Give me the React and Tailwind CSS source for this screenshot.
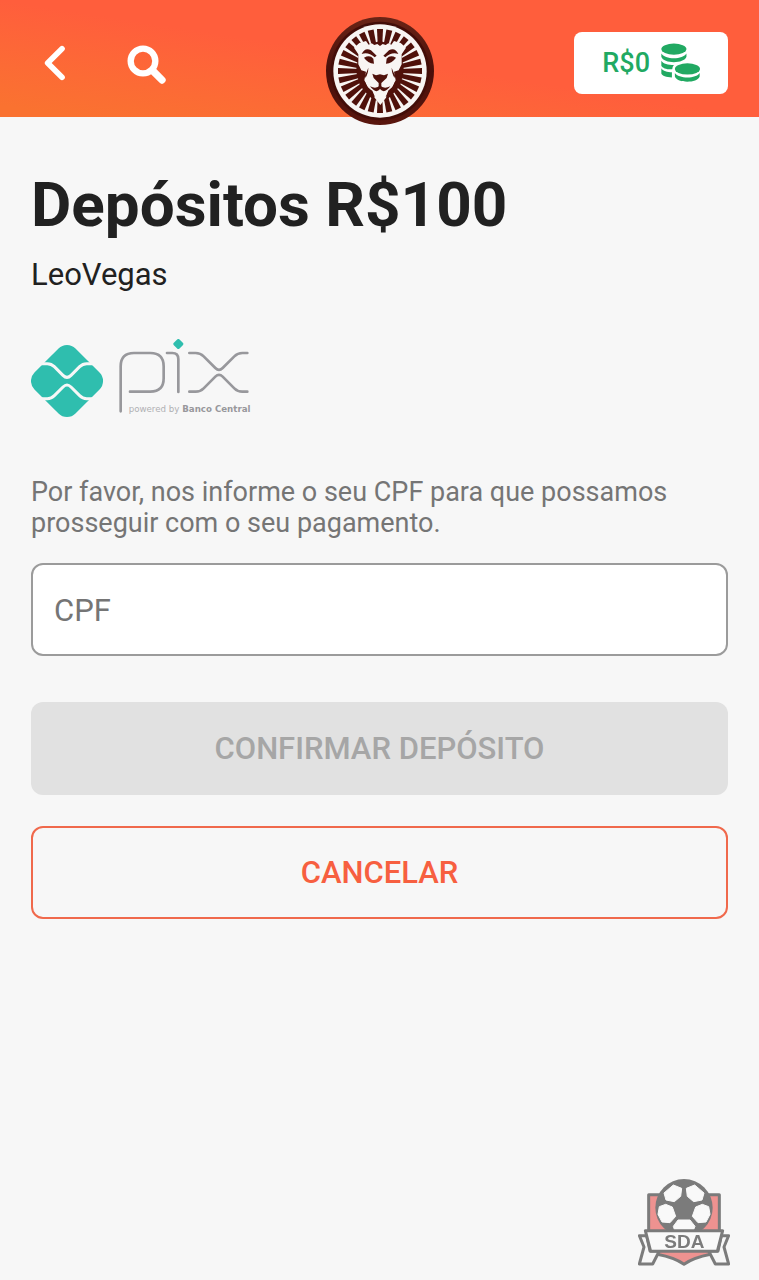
import React, { useState } from "react";

const RAY_COUNT = 28;

const LionLogo = () => (
  <svg viewBox="18 20 324 324" className="w-27 h-27" aria-hidden="true">
    <defs>
      <linearGradient id="lionRing" x1="0" y1="0" x2="0" y2="1">
        <stop offset="0" stopColor="#6a2416" />
        <stop offset="0.5" stopColor="#4a0f0a" />
        <stop offset="1" stopColor="#5a160e" />
      </linearGradient>
    </defs>
    <circle cx="180" cy="182" r="162" fill="url(#lionRing)" />
    <circle cx="180" cy="182" r="148" fill="#430d08" />
    <circle cx="180" cy="182" r="140" fill="#f8f5f3" />
    <g fill="#4f110b">
      {Array.from({ length: RAY_COUNT }, (_, i) => (
        <polygon
          key={i}
          points="171,56 189,56 186,122 174,122"
          transform={`rotate(${(360 / RAY_COUNT) * i} 180 182)`}
        />
      ))}
      <path d="M180 92 L208 100 L222 112 L244 132 L252 182 L240 226 L214 256 L198 270 H162 L146 256 L120 226 L108 182 L116 132 L138 112 L152 100 Z" />
    </g>
    {/* face */}
    <path
      fill="#f8f5f3"
      d="M138 92 L146 103 L155 99 L163 104 L172 101 L180 107 L188 101 L197 104 L205 99 L214 103 L222 92 L242 98 L258 112 L245 132 L245 162 L236 180 L222 184 L227 210 L217 230 L206 240 L198 262 L181 284 L164 262 L154 240 L143 230 L133 210 L138 184 L124 180 L115 162 L115 132 L102 112 L118 98 Z"
    />
    <g fill="#4f110b">
      <path d="M125 131 Q135 110 153 120 L170 136 L164 141 Q144 123 125 131 Z" />
      <path d="M235 131 Q225 110 207 120 L190 136 L196 141 Q216 123 235 131 Z" />
      <path d="M132 142 Q150 132 160 145 L162 160 Q143 158 132 142 Z" />
      <path d="M228 142 Q210 132 200 145 L198 160 Q217 158 228 142 Z" />
      <path d="M157 190 L168 195 L180 192 L192 195 L204 190 L200 203 L184 218 V228 H176 V218 L161 203 Z" />
      <path d="M150 228 Q170 238 180 224 Q190 238 211 228 Q193 252 180 236 Q168 252 150 228 Z" />
      <path d="M135 194 Q141 184 145 172 Q145 190 136 203 Z" />
      <path d="M225 194 Q219 184 215 172 Q215 190 224 203 Z" />
      <path d="M134 212 Q143 238 157 241 L165 260 L146 248 L130 226 Z" />
      <path d="M226 212 Q217 238 205 241 L197 260 L216 248 L230 226 Z" />
    </g>
  </svg>
);

const CoinsIcon = () => (
  <svg
    viewBox="300 70 118 120"
    className="w-[39px] h-10"
    fill="#21a962"
    aria-hidden="true"
  >
    <ellipse cx="339" cy="88" rx="38" ry="17" />
    <path d="M301 101 C311 120 367 120 377 101 V111 C370 133 308 133 301 111 Z" />
    <path d="M301 123 C306 132 322 136 339 136 Q334 142 334 149 C318 150 304 145 301 138 Z" />
    <path d="M301 146 C305 154 320 158 333 158 V174 C316 173 303 169 301 162 Z" />
    <ellipse cx="380" cy="148" rx="38" ry="17" />
    <path d="M342 160 C353 178 407 178 417 160 V171 C410 192 349 192 342 171 Z" />
  </svg>
);

const PixLogo = () => (
  <svg
    viewBox="33 25 666 237"
    className="w-[222px] h-[79px]"
    role="img"
    aria-label="Pix"
  >
    <rect
      x="54"
      y="64"
      width="174"
      height="174"
      rx="36"
      fill="#2fbeae"
      transform="rotate(45 141 151)"
    />
    <g fill="none" stroke="#f7f7f7" strokeWidth="9">
      <path d="M56 99 H82 Q94 99 103 108 L129 134 Q141 146 153 134 L179 108 Q188 99 200 99 H226" />
      <path d="M56 204 H82 Q94 204 103 195 L129 169 Q141 157 153 169 L179 195 Q188 204 200 204 H226" />
    </g>
    <g fill="none" stroke="#98989c" strokeWidth="8" strokeLinecap="round">
      <path d="M302 242 V107 Q302 67 342 67 H391 Q431 67 431 107 V143 Q431 183 391 183 H330" />
      <path d="M441 67 H457 Q475 67 475 85 V184" />
      <path d="M508 67 H527 Q541 67 551 77 L586 112 Q597 123 608 112 L643 77 Q653 67 667 67 H682" />
      <path d="M508 183 H527 Q541 183 551 173 L586 138 Q597 127 608 138 L643 173 Q653 183 667 183 H682" />
    </g>
    <rect
      x="463"
      y="28"
      width="24"
      height="24"
      rx="5"
      fill="#2fbeae"
      transform="rotate(45 475 40)"
    />
    <text x="326" y="243" fontSize="26" fill="#b0b0b3" fontFamily="DejaVu Sans, sans-serif">
      powered by{" "}
      <tspan fontWeight="bold" fill="#98989c">
        Banco Central
      </tspan>
    </text>
  </svg>
);

const SdaBadge = () => (
  <svg viewBox="24 26 276 261" className="w-23 h-[87px]" role="img" aria-label="SDA">
    <g stroke="#7b7b7b" strokeWidth="9" strokeLinejoin="round">
      <path
        fill="#ee9290"
        d="M56 73 H268 V220 Q268 244 242 252 Q190 262 162 282 Q134 262 82 252 Q56 244 56 220 Z"
      />
      <path fill="#f7f7f7" d="M50 196 H28 L42 230 L28 281 H68 L88 242 H60 Z" />
      <path fill="#f7f7f7" d="M274 196 H296 L282 230 L296 281 H256 L236 242 H264 Z" />
    </g>
    <circle cx="162" cy="112" r="86" fill="#7b7b7b" />
    <g fill="#f9f9f9" stroke="#f9f9f9" strokeWidth="3" strokeLinejoin="round">
      <path d="M102 68 L130 44 L155 54 L152 78 L133 94 L108 89 Z" />
      <path d="M222 68 L194 44 L169 54 L172 78 L191 94 L216 89 Z" />
      <path d="M88 109 L107 102 L127 110 L137 138 L120 157 L96 155 L84 132 Z" />
      <path d="M236 109 L217 102 L197 110 L187 138 L204 157 L228 155 L240 132 Z" />
      <path d="M144 149 H180 L195 168 L190 180 H134 L130 168 Z" />
    </g>
    <path
      d="M46 181 H278 L262 243 H62 Z"
      fill="#f9f9f9"
      stroke="#7b7b7b"
      strokeWidth="9"
      strokeLinejoin="round"
    />
    <text
      x="163"
      y="233"
      fontSize="57"
      fontWeight="bold"
      textAnchor="middle"
      fill="#7b7b7b"
      fontFamily="Liberation Sans, sans-serif"
    >
      SDA
    </text>
  </svg>
);

const App = () => {
  const [cpf, setCpf] = useState("");
  const canConfirm = cpf.replace(/\D/g, "").length === 11;

  return (
    <div className="min-h-screen bg-[#f7f7f7] font-['Roboto',sans-serif] text-[#212121]">
      <header className="relative flex items-center justify-between pt-8 pb-[23px] pl-[43px] pr-[31px] bg-linear-to-tr from-[#fa7230] from-5% via-[#ff5e3c] via-50% to-[#ff5e3c]">
        <div className="flex items-center gap-[62px]">
          <button type="button" aria-label="Voltar">
            <svg
              viewBox="130 136 66 108"
              className="w-[22px] h-9"
              fill="none"
              stroke="white"
              strokeWidth="17"
              strokeLinecap="round"
              strokeLinejoin="round"
            >
              <path d="M187 147 L144 190 L187 233" />
            </svg>
          </button>
          <button type="button" aria-label="Buscar">
            <svg
              viewBox="383 129 120 123"
              className="w-10 h-[41px]"
              fill="none"
              stroke="white"
              strokeLinecap="round"
            >
              <circle cx="431" cy="183" r="37" strokeWidth="19" />
              <path d="M463 215 L488 240" strokeWidth="22" />
            </svg>
          </button>
        </div>
        <div className="absolute top-[17px] left-1/2 -translate-x-1/2">
          <LionLogo />
        </div>
        <button
          type="button"
          className="flex items-center justify-center gap-[11px] h-[62px] px-7 rounded-lg bg-white text-[27px] font-medium text-[#21a962]"
        >
          R$0
          <CoinsIcon />
        </button>
      </header>

      <main className="px-[31px] pt-[52px]">
        <h1 className="text-[62px] leading-[72px] font-bold">
          Depósitos R$100
        </h1>
        <p className="mt-4 text-[31px] leading-9">LeoVegas</p>
        <div className="mt-[46px]">
          <PixLogo />
        </div>
        <form className="mt-[59px]" onSubmit={(e) => e.preventDefault()}>
          <label
            htmlFor="cpf"
            className="block text-[27px] leading-[31px] text-[#757575]"
          >
            Por favor, nos informe o seu CPF para que possamos prosseguir com o
            seu pagamento.
          </label>
          <input
            id="cpf"
            type="text"
            inputMode="numeric"
            placeholder="CPF"
            value={cpf}
            onChange={(e) => setCpf(e.target.value)}
            className="block w-full h-[93px] mt-6 px-[21px] pt-0.5 rounded-xl border-2 border-[#9b9b9b] bg-white text-[31px] placeholder:text-[#757575]"
          />
          <button
            type="submit"
            disabled={!canConfirm}
            className="block w-full h-[93px] mt-[46px] pt-0.5 rounded-xl bg-[#ff5e3c] text-[31px] font-medium text-white disabled:bg-[#e1e1e1] disabled:text-[#a6a6a6]"
          >
            CONFIRMAR DEPÓSITO
          </button>
          <button
            type="button"
            className="block w-full h-[93px] mt-[31px] pt-0.5 rounded-xl border-2 border-[#f0694c] text-[31px] font-medium text-[#f75f40]"
          >
            CANCELAR
          </button>
        </form>
      </main>

      <div className="fixed right-[29px] bottom-3.5">
        <SdaBadge />
      </div>
    </div>
  );
};

export default App;
